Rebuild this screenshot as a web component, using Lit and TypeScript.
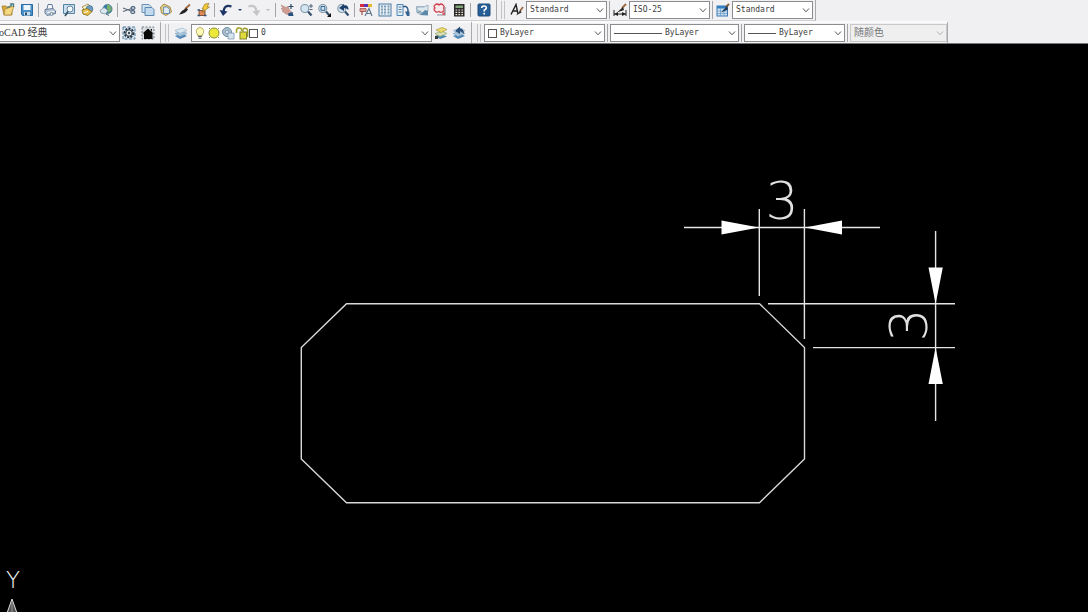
import { LitElement, html, svg, css, nothing, type SVGTemplateResult } from 'lit';
import { customElement, property } from 'lit/decorators.js';

const lens = svg`
  <path d="M9 8.5 L12.5 12.5" stroke="#34506e" stroke-width="2.2"/>
  <circle cx="5.8" cy="5.5" r="4" fill="#d3e5f1" stroke="#8297a9" stroke-width="1.1"/>`;
const sheets = svg`
  <path d="M1 10 L8 7.5 L13 10 L6 13Z" fill="#4f86b5"/>
  <path d="M1 7.5 L8 5 L13 7.5 L6 10.5Z" fill="#a9c6dd" stroke="#6d93b3" stroke-width=".5"/>
  <path d="M1 4.5 L8 2 L13 4.5 L6 7.5Z" fill="#dbe9f3" stroke="#7d9fbb" stroke-width=".5"/>`;

const icons: Record<string, SVGTemplateResult> = {
  open: svg`
    <path d="M1 3 H5 L6 4 H11 V12 H3Z" fill="#d9a93c" stroke="#9b7422" stroke-width=".7"/>
    <path d="M4 6 L13 3 L10 12 H3Z" fill="#f3d880" stroke="#a78232" stroke-width=".7"/>
    <path d="M6 5 L11 2 M9 1 H12.5 V4" stroke="#4c7f86" stroke-width="1.3"/>`,
  save: svg`
    <path d="M1.5 1.5 H12.5 V12.5 H2.5 L1.5 11.5Z" fill="#4a8fc6" stroke="#2b6ba3"/>
    <rect x="3.5" y="2" width="7" height="5" fill="#edf5fb"/>
    <path d="M4 9 H10 V12.5 H4Z" fill="#c6dceb"/><path d="M5 9.5 H7 V12 H5Z" fill="#264f72"/>`,
  print: svg`
    <path d="M4 6 L5 1.5 H9 L10 6" fill="#f7fafc" stroke="#52698d" stroke-width=".9"/>
    <path d="M2 6.5 L10 5.5 L12.5 8 V10.5 L4 12.5 L2 10Z" fill="#b7c7d8" stroke="#5a7191" stroke-width=".9"/>
    <path d="M4.5 9.5 L11 8.5" stroke="#fff"/><circle cx="8.5" cy="11" r="1.5" fill="#e9eff5" stroke="#48617f" stroke-width=".7"/>`,
  preview: svg`
    <path d="M1.5 1.5 H12.5 V10.5 H1.5Z" fill="#c9deee" stroke="#5585a5"/>
    <circle cx="8" cy="6" r="3" fill="#f3fafd" stroke="#6c8699"/>
    <path d="M6 8.5 L3 13" stroke="#354f65" stroke-width="1.7"/>`,
  publish: svg`
    <path d="M2 4 L8 1 L11 4 L5 7Z" fill="#fcf3c4" stroke="#937d37" stroke-width=".8"/>
    <circle cx="9.5" cy="6" r="3.4" fill="#6e9bc1" stroke="#446b8d" stroke-width=".7"/>
    <path d="M2 7 L7 5.5 L12 8.5 L8 12.5 L3 11Z" fill="#e3be48" stroke="#83671f" stroke-width=".8"/>
    <path d="M4 9.5 L8 8.5" stroke="#fff"/>`,
  globe: svg`
    <circle cx="8.5" cy="6" r="4.6" fill="#347fa8" stroke="#37627f" stroke-width=".6"/>
    <path d="M8 1.4 Q13 2 12.5 7 L9.5 10 L8 5Z" fill="#79b169"/>
    <path d="M1 7.5 L5 4.5 L9 7.5 L6.5 11 L2 10Z" fill="#dae6ee" stroke="#7b93a6" stroke-width=".8"/>
    <path d="M7 11 L10 12.5" stroke="#456277"/>`,
  cut: svg`
    <path d="M1 5 L9 8 M1 8.5 L10 5.5" stroke="#5f6d7c" stroke-width="1.2"/>
    <ellipse cx="11" cy="5" rx="2" ry="1.4" stroke="#3f5877" stroke-width="1.1"/>
    <ellipse cx="10.8" cy="9" rx="2" ry="1.4" stroke="#3f5877" stroke-width="1.1"/>`,
  copy: svg`
    <path d="M1 1.5 H8 L10 3.5 V9.5 H1Z" fill="#cfe1f1" stroke="#6791b8"/>
    <path d="M4 4.5 H11 L13 6.5 V12.5 H4Z" fill="#c0d9ed" stroke="#5c88b0"/>`,
  paste: svg`
    <path d="M1.5 4 L5 1 L11 4 L12.5 9 L7 12.5 L2.5 10Z" fill="#e8cf8a" stroke="#a58a4b"/>
    <path d="M4.5 4 H8.5 L10.5 6.5 V10.5 H4.5Z" fill="#dceaf5" stroke="#5f86a9" stroke-width=".9"/>`,
  match: svg`
    <path d="M13 1.5 L8 6" stroke="#a06c42" stroke-width="1.8"/>
    <path d="M9.5 5 Q5 7 2 11.5 Q8 11 11 6.5Z" fill="#222"/>`,
  blockedit: svg`
    <path d="M3 7.5 H9 V12.5 H3Z" fill="#e08a5b" stroke="#61391f" stroke-width=".8"/>
    <path d="M9 1 L13 .5 L11 4 L13.5 4 L6 9.5 L8 6 L6 6Z" fill="#f5cd38" stroke="#8c681f" stroke-width=".6"/>
    <path d="M1.5 7 H4 M1.5 12.5 H4 M8 12.5 H10.5" stroke="#2f5276" stroke-width="1.5"/>`,
  undo: svg`<path d="M12.5 3.5 Q5 1 4.5 9" stroke="#1d3566" stroke-width="2.3"/><path d="M.5 7 L8.5 8.5 L4 13Z" fill="#1d3566"/>`,
  redo: svg`<path d="M1.5 3.5 Q9 1 9.5 9" stroke="#c3c5c8" stroke-width="2.3"/><path d="M13.5 7 L5.5 8.5 L10 13Z" fill="#c3c5c8"/>`,
  pan: svg`
    <path d="M1 2 L6 4.5 L8 3.5 L9.5 7 L12 9.5 L10 12 L6 11 L2 8 L3.5 7.5 L1 5.5 L3 5Z" fill="#cf9c93" stroke="#b07d75" stroke-width=".6"/>
    <path d="M8 10.5 L12.5 9 L13.5 13 H8.5Z" fill="#28507e"/><path d="M11 1 V6 M8.5 3.5 H13.5" stroke="#2d4a66" stroke-width="1.2"/>`,
  zoom: svg`${lens}<path d="M12 1 V5 M10 3 H14 M10.5 6.5 H13.5" stroke="#4d6579"/>`,
  zoomwin: svg`${lens}<path d="M4 3.5 H7.8 V7.3 H4Z" stroke="#2f628c"/><path d="M14 10 V14 H10Z" fill="#111"/>`,
  zoomprev: svg`${lens}<path d="M3 5 L8 1 V2.5 Q12.5 1.5 12.5 7 Q10.5 4.8 8 5.3 V8Z" fill="#1c3f6b"/>`,
  properties: svg`
    <rect x="1" y="1" width="4" height="3" fill="#d42c45"/><rect x="5" y="1" width="4" height="3" fill="#5a32b4"/><rect x="9" y="1" width="4" height="3" fill="#e7b92c"/>
    <path d="M1 5.5 H7 V8.5 H1Z" fill="#d99d98" stroke="#a24e48" stroke-width=".8"/><path d="M3 8 V12" stroke="#a24e48" stroke-width="1.2"/>
    <path d="M6 13 L10 5.5 L13 13 M7.5 10.5 H12" stroke="#60788f" stroke-width="1.2"/>`,
  center: svg`
    <rect x="1" y="1" width="12" height="12" fill="#e7eff4" stroke="#4c7da3"/>
    <path d="M4 2.5 V12 M7 2.5 V12 M10.5 2.5 V12" stroke="#6f95b1" stroke-width="1.8" stroke-dasharray="2 1"/>`,
  palettes: svg`
    <path d="M1 1.5 H7 V12.5 H1Z" fill="#e2edf6" stroke="#4c86ba"/>
    <path d="M2.5 4 H5.5 M2.5 6.5 H5.5 M2.5 9 H5.5" stroke="#6084a0"/>
    <path d="M7 3.5 H10 Q12.5 5 12 9" stroke="#2e5884" stroke-width="1.4"/><path d="M9 8.5 H13.5 V13 H11Z" fill="#34618d"/>`,
  sheetset: svg`
    <path d="M1 3 H9 L13 6 V12 H5 L1 9Z" fill="#a9bfce"/>
    <path d="M2 4 H9 L13 2 V8 L8 10 L2 7Z" fill="#dce7ee" stroke="#8fa5b6" stroke-width=".8"/>
    <path d="M5 12 L10 7 L13 8 V12.5Z" fill="#5c89aa"/><path d="M2 10 L6 8" stroke="#7f97a8"/>`,
  markup: svg`
    <path d="M2 2 Q4 0 6 2 Q8 0 10 2 Q12 3 10.5 5 Q12 7 10 8.5 Q8 10 6 8.5 Q3 10 2 8 Q0 6 2 5 Q0 3 2 2Z" fill="#fbe8ea" stroke="#cb3947" stroke-width="1.2"/>
    <path d="M12 4 V12 H4" stroke="#8e8f9a" stroke-width="1.2"/><path d="M9.5 9.5 H12 V12 H9.5Z" fill="#d15561"/>`,
  calc: svg`
    <rect x="2" y="1" width="10.5" height="12.5" fill="#282828"/><rect x="3.5" y="2.5" width="7.5" height="2.5" fill="#7fa276"/>
    <path d="M3.5 7 H11 M3.5 9.3 H11 M3.5 11.6 H11" stroke="#e9e0cf" stroke-width="1.2" stroke-dasharray="1.7 1.2"/>`,
  help: svg`
    <rect x="1" y="1" width="12" height="12" rx="1" fill="#265f97" stroke="#1c4a78"/>
    <path d="M4.7 5 Q4.7 3 7 3 Q9.5 3 9.3 5 Q9 6.3 7.2 7.2 V8.5 M7.2 9.8 V11.4" stroke="#fff" stroke-width="1.6"/>`,
  textstyle: svg`
    <path d="M1 11.5 L6 1.5 L8 11 M3 8 H7.5" stroke="#222" stroke-width="1.4"/>
    <path d="M13 4 L10 8" stroke="#9a6840" stroke-width="1.7"/><path d="M10.5 7 L6 12.5 L11.5 9.5Z" fill="#333"/>`,
  dimstyle: svg`
    <path d="M1 7 V13 M13 7 V13 M1 11 H13" stroke="#222"/><path d="M1 11 L5 9 V13Z M13 11 L9 9 V13Z" fill="#222"/>
    <path d="M13 1 L9 5" stroke="#9a6840" stroke-width="1.8"/><path d="M10 4 L4 9.5 L11 7Z" fill="#222"/>`,
  tablestyle: svg`
    <rect x="1" y="3" width="10.5" height="10" fill="#cfe1f1" stroke="#3b78b3"/><rect x="1" y="3" width="10.5" height="2.5" fill="#337fc4"/>
    <path d="M4.5 5 V13 M8 5 V13 M1 8 H11 M1 10.5 H11" stroke="#6ba0ce" stroke-width=".8"/>
    <path d="M13 1 L10 4" stroke="#8a5a32" stroke-width="1.8"/><path d="M11 3 L5 9.5 L12 6.5Z" fill="#263c55"/>`,
  gear: svg`
    <rect x="1" y="1" width="12" height="12" fill="#cfdde8" stroke="#4e7fa4" stroke-dasharray="3 1.5"/>
    <circle cx="7" cy="7" r="4.3" stroke="#24313d" stroke-width="2" stroke-dasharray="2 1.2"/>
    <circle cx="7" cy="7" r="3.2" fill="#e8edf0" stroke="#2d3b47"/><circle cx="7" cy="7" r="1.2" fill="#3d4b57"/>`,
  home: svg`
    <rect x="1" y="1" width="12" height="12" fill="#d9dee2" stroke="#73818b" stroke-dasharray="2 1.5"/>
    <path d="M1.5 7.5 L7 2.5 L12.5 7.5 H11.5 V13 H3 V7.5Z" fill="#090909"/><path d="M9.5 3 H11 V6" fill="#090909"/>`,
  layers: sheets,
  layerprev: svg`${sheets}<path d="M3 5 L8 .5 V2.5 Q12 2.5 12 8 Q9.5 5 8 5.5 V8Z" fill="#2b4f7c"/>`,
  layercur: svg`
    <path d="M1 10 L7 8 L13 10.5 L6 13Z" fill="#4f86b5"/><path d="M1 7.5 L8 5 L13 7.5 L6 10.5Z" fill="#d5dfb4" stroke="#8a9c62" stroke-width=".6"/>
    <path d="M2 4 L8 1.5 L13 3.5 L7 6.5Z" fill="#eddc6c" stroke="#a18c2d" stroke-width=".6"/><path d="M1 10 H4 V13 H1Z" fill="#3c3c3c"/>`,
  bulb: svg`
    <path d="M4.5 9.5 Q4.5 8 3.5 6.8 Q2.5 2 7 1.5 Q11.5 2 10.5 6.8 Q9.5 8 9.5 9.5Z" fill="#fdf7b8" stroke="#b8a658" stroke-width=".9"/>
    <path d="M5 10.5 H9 M5.5 12.2 H8.5" stroke="#596a78" stroke-width="1.2"/>`,
  sun: svg`<circle cx="7" cy="7" r="5" fill="#ece93a" stroke="#8f9038"/><path d="M2 2 L3 3 M12 2 L11 3 M2 12 L3 11 M12 12 L11 11" stroke="#8b8d50"/>`,
  freeze: svg`
    <circle cx="6" cy="6" r="4.5" fill="#a9c0d0" stroke="#728da0"/><circle cx="6" cy="6" r="1.8" fill="#d9e4ec" stroke="#6f8799" stroke-width=".7"/>
    <path d="M7 7 H13 V13 H7Z" fill="#d6e5ee" stroke="#7c9ab1" stroke-width=".8"/>`,
  lock: svg`
    <path d="M1.5 7 V4 Q2 1.5 4.5 2 Q7 2 6.5 5" stroke="#a3a42c" stroke-width="1.6"/>
    <rect x="5" y="6" width="6.5" height="7" fill="#e0dc3e" stroke="#84852a"/><path d="M8 6 V3.5 Q9 1.5 11 2.5 Q13 3 12.7 6 V11" stroke="#9c9d28" stroke-width="1.4"/>`,
};

const icon = (name: string) =>
  html`<svg class="icon" viewBox="0 0 14 14" fill="none" aria-hidden="true">${icons[name]}</svg>`;

const shared = css`
  .icon {
    display: block;
    width: 14px;
    height: 14px;
    flex: none;
  }
`;

/** Drop-down box with optional artwork ahead of the selected value. */
@customElement('cad-combo')
class CadCombo extends LitElement {
  @property() label = '';
  @property() value = '';
  @property() lead = '';
  @property({ type: Boolean }) disabled = false;

  static styles = [
    shared,
    css`
      :host {
        display: block;
        height: 18px;
        box-sizing: border-box;
        background: #fff;
        border: 1px solid #8c8c8e;
      }
      :host([disabled]) {
        background: #efeff0;
        border-color: #c9c9cb;
      }
      .box {
        display: grid;
        grid-template-columns: auto 1fr;
        height: 100%;
      }
      .lead,
      select,
      .chevron {
        grid-row: 1;
        align-self: center;
      }
      .lead {
        grid-column: 1;
        display: flex;
        align-items: center;
        padding-left: 3px;
        pointer-events: none;
      }
      .lead.layer {
        padding-left: 1px;
      }
      .lead.layer .icon {
        width: 14px;
      }
      .line {
        width: 48px;
        border-top: 1px solid #555;
      }
      .line.short {
        width: 28px;
      }
      .swatch {
        width: 7px;
        height: 7px;
        border: 1px solid #555;
        background: #fff;
      }
      select {
        grid-column: 2;
        min-width: 0;
        width: 100%;
        height: 16px;
        appearance: none;
        border: 0;
        border-radius: 0;
        padding: 0 14px 0 3px;
        background: none;
        color: #3c3c3c;
        font: 8px/16px 'DejaVu Sans Mono', 'Noto Sans CJK SC', monospace;
      }
      select:lang(zh) {
        font-size: 10px;
        font-family: 'Liberation Serif', 'Noto Sans CJK SC', serif;
      }
      select:disabled {
        color: #777;
        opacity: 1;
      }
      .chevron {
        grid-column: 2;
        justify-self: end;
        width: 8px;
        height: 5px;
        margin-right: 2px;
        pointer-events: none;
        stroke: #555;
      }
      :host([disabled]) .chevron {
        stroke: #b5b5b5;
      }
    `,
  ];

  private renderLead() {
    switch (this.lead) {
      case 'line':
        return html`<span class="lead"><span class="line"></span></span>`;
      case 'short':
        return html`<span class="lead"><span class="line short"></span></span>`;
      case 'swatch':
        return html`<span class="lead"><span class="swatch"></span></span>`;
      case 'layer':
        return html`<span class="lead layer">
          ${['bulb', 'sun', 'freeze', 'lock'].map(icon)}<span class="swatch"></span>
        </span>`;
      default:
        return nothing;
    }
  }

  render() {
    const chinese = /[\u4e00-\u9fff]/.test(this.value);
    return html`<div class="box">
      ${this.renderLead()}
      <select lang=${chinese ? 'zh' : 'en'} aria-label=${this.label} ?disabled=${this.disabled}>
        <option>${this.value}</option>
      </select>
      <svg class="chevron" viewBox="0 0 8 5" fill="none" aria-hidden="true"><path d="M1 .5 L4 3.8 L7 .5" /></svg>
    </div>`;
  }
}

type Tool = [name: string, label: string];

@customElement('app-root')
class AppRoot extends LitElement {
  static styles = [
    shared,
    css`
      :host {
        display: flex;
        flex-direction: column;
        height: 100vh;
        background: #000;
        overflow: hidden;
      }
      .bars {
        background: #f0eff1;
        border-bottom: 1px solid #77777a;
        overflow: hidden;
      }
      .row {
        display: flex;
        height: 21px;
      }
      .row.second {
        height: 22px;
      }
      .bar {
        display: flex;
        align-items: center;
        flex: none;
        box-sizing: border-box;
        border-right: 1px solid #a9a9ab;
        border-bottom: 1px solid #d0d0d2;
        background: #f1f0f2;
      }
      .second .bar {
        border-bottom: 0;
        border-top: 2px solid #fafafa;
      }
      .grip {
        width: 2px;
        height: 18px;
        margin: 0 3px 0 4px;
        border: solid #c2c2c4;
        border-width: 0 1px;
      }
      .group {
        display: flex;
      }
      .pair {
        width: 37px;
      }
      .four {
        width: 74px;
      }
      .five {
        width: 92px;
      }
      .six {
        width: 111px;
      }
      .tool {
        flex: 1;
        min-width: 18px;
        height: 18px;
        display: flex;
        align-items: center;
        justify-content: center;
        padding: 0;
        border: 0;
        background: none;
      }
      .more {
        width: 10px;
        padding: 0;
        border: 0;
        background: none;
        display: flex;
        align-items: center;
        justify-content: center;
      }
      .more::before {
        content: '';
        border: 2px solid transparent;
        border-top-color: #2c4266;
        border-bottom: 0;
      }
      .more:disabled::before {
        border-top-color: #bbb;
      }
      .sep {
        width: 1px;
        height: 14px;
        margin: 0 2px;
        background: #a5a5a7;
      }
      .standard {
        width: 499px;
        padding-left: 1px;
        margin-left: -2px;
      }
      .standard .sep:last-of-type {
        margin-right: 1px;
      }
      .styles {
        width: 319px;
      }
      .styles .tool,
      .layers .tool {
        flex: none;
      }
      .styles cad-combo {
        width: 81px;
      }
      .styles .sep {
        height: 18px;
        margin: 0 1px 0 2px;
      }
      .workspace {
        width: 161px;
      }
      .workspace cad-combo {
        flex: none;
        width: 140px;
        margin-left: -20px;
      }
      .layers {
        width: 311px;
      }
      .layers cad-combo {
        width: 241px;
        margin-left: 1px;
      }
      .props {
        width: 476px;
      }
      .props .grip {
        margin-left: 5px;
      }
      .props .sep {
        height: 18px;
      }
      .c1 {
        width: 121px;
      }
      .c2 {
        width: 129px;
      }
      .c3 {
        width: 101px;
      }
      .c4 {
        width: 97px;
      }
      .canvas {
        flex: 1;
        width: 100%;
        min-height: 0;
        display: block;
      }
      .outline {
        stroke: #d8d8d8;
        stroke-width: 1.4;
      }
      .dim {
        stroke: #e4e4e4;
        stroke-width: 1.4;
      }
      .figure {
        font: 200 52px 'DejaVu Sans', 'DejaVu Sans Light', sans-serif;
        fill: #e0e0e0;
        text-anchor: middle;
      }
      .axis {
        font: 200 23px 'DejaVu Sans', 'DejaVu Sans Light', sans-serif;
        fill: #f4f4f4;
        text-anchor: middle;
      }
    `,
  ];

  private tool([name, label]: Tool) {
    return html`<button class="tool" aria-label=${label} title=${label}>${icon(name)}</button>`;
  }

  private group(size: string, tools: Tool[]) {
    return html`<div class="group ${size}">${tools.map((t) => this.tool(t))}</div>`;
  }

  render() {
    const sep = html`<span class="sep"></span>`;
    const grip = html`<span class="grip"></span>`;
    return html`
      <header class="bars">
        <div class="row">
          <div class="bar standard">
            ${this.group('pair', [['open', '打开'], ['save', '保存']])}${sep}
            ${this.group('four', [['print', '打印'], ['preview', '打印预览'], ['publish', '发布'], ['globe', '三维打印']])}${sep}
            ${this.group('five', [['cut', '剪切'], ['copy', '复制'], ['paste', '粘贴'], ['match', '特性匹配'], ['blockedit', '块编辑器']])}${sep}
            <div class="group">
              ${this.tool(['undo', '放弃'])}<button class="more" aria-label="放弃列表"></button>
              ${this.tool(['redo', '重做'])}<button class="more" aria-label="重做列表" disabled></button>
            </div>
            ${sep}
            ${this.group('four', [['pan', '平移'], ['zoom', '实时缩放'], ['zoomwin', '窗口缩放'], ['zoomprev', '缩放上一个']])}${sep}
            ${this.group('six', [['properties', '特性'], ['center', '设计中心'], ['palettes', '工具选项板'], ['sheetset', '图纸集'], ['markup', '标记集'], ['calc', '快速计算器']])}${sep}
            ${this.tool(['help', '帮助'])}
          </div>
          <div class="bar styles">
            ${grip}${this.tool(['textstyle', '文字样式'])}
            <cad-combo label="文字样式" value="Standard"></cad-combo>${sep}
            ${this.tool(['dimstyle', '标注样式'])}
            <cad-combo label="标注样式" value="ISO-25"></cad-combo>${sep}
            ${this.tool(['tablestyle', '表格样式'])}
            <cad-combo label="表格样式" value="Standard"></cad-combo>
          </div>
        </div>
        <div class="row second">
          <div class="bar workspace">
            <cad-combo label="工作空间" value="AutoCAD 经典"></cad-combo>
            ${this.group('pair', [['gear', '工作空间设置'], ['home', '我的工作空间']])}
          </div>
          <div class="bar layers">
            ${grip}${this.tool(['layers', '图层特性'])}
            <cad-combo label="图层" lead="layer" value="0"></cad-combo>
            ${this.tool(['layercur', '置为当前'])}${this.tool(['layerprev', '上一个图层'])}
          </div>
          <div class="bar props">
            ${grip}
            <cad-combo class="c1" label="颜色" lead="swatch" value="ByLayer"></cad-combo>${sep}
            <cad-combo class="c2" label="线型" lead="line" value="ByLayer"></cad-combo>${sep}
            <cad-combo class="c3" label="线宽" lead="short" value="ByLayer"></cad-combo>${sep}
            <cad-combo class="c4" label="打印样式" value="随颜色" disabled></cad-combo>
          </div>
        </div>
      </header>
      <svg class="canvas" viewBox="0 44 1088 568" preserveAspectRatio="xMinYMin slice" fill="none">
        <path class="outline" d="M346.5 303.7 H759.5 L804.5 347.5 V459 L759.5 502.7 H346.5 L301.3 459 V347.5Z" />
        <path class="dim" d="M684 227.5 H880 M759.3 209 V296 M804.4 209 V339" />
        <path class="dim" d="M935.6 231 V421 M768 303.7 H955 M813 347.6 H955" />
        <path fill="#fff" d="M759 227.5 L721.5 220.5 V234.5Z M805 227.5 L842 220.5 V234.5Z" />
        <path fill="#fff" d="M935.6 304 L928.5 267.5 H942.8Z M935.6 347.5 L928.5 384 H942.8Z" />
        <text class="figure" x="782" y="219">3</text>
        <text class="figure" transform="translate(927 325) rotate(-90)">3</text>
        <text class="axis" x="13" y="588">Y</text>
        <path d="M12 599 L6 616 H18Z" fill="#555" stroke="#ddd" />
        <path d="M12 602 V612" stroke="#999" />
      </svg>
    `;
  }
}
